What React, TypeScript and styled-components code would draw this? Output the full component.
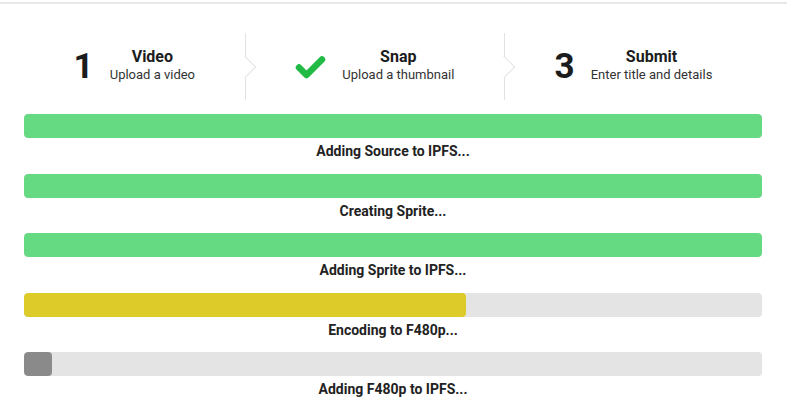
import { createGlobalStyle, styled } from "styled-components";

const GlobalStyle = createGlobalStyle`
  html, body {
    margin: 0;
    padding: 0;
    background: #ffffff;
  }
  body {
    font-family: Roboto, "Liberation Sans", sans-serif;
    color: #1f1f1f;
  }
`;

const Page = styled.div`
  padding-top: 2px;
`;

const TopRule = styled.div`
  height: 2px;
  background: #e8e8e8;
`;

const Content = styled.div`
  padding: 29px 25px 0 24px;
`;

const Steps = styled.div`
  display: flex;
  height: 67px;
`;

const Step = styled.div<{ last?: boolean }>`
  position: relative;
  flex: 1 1 auto;
  display: flex;
  align-items: center;
  justify-content: center;
  gap: 16px;
  padding: 0 48px;
  border-right: ${(p) => (p.last ? "none" : "1px solid #e2e2e2")};

  &::after {
    content: "";
    display: ${(p) => (p.last ? "none" : "block")};
    position: absolute;
    top: 50%;
    right: 0;
    width: 15px;
    height: 15px;
    background: #ffffff;
    border-top: 1px solid #e2e2e2;
    border-right: 1px solid #e2e2e2;
    transform: translate(50%, -50%) rotate(45deg);
    z-index: 2;
  }
`;

const StepNumber = styled.div`
  font-size: 35px;
  font-weight: 700;
  line-height: 1;
  color: #1b1c1d;
`;

const StepText = styled.div`
  display: flex;
  flex-direction: column;
  align-items: center;
  gap: 1px;
  margin-top: -2px;
`;

const StepTitle = styled.div`
  font-size: 16px;
  font-weight: 700;
  line-height: 18px;
  color: #1b1c1d;
`;

const StepDesc = styled.div`
  font-size: 13px;
  line-height: 16px;
  color: #333333;
`;

const Bars = styled.div`
  padding-top: 14px;
  display: flex;
  flex-direction: column;
  gap: 14.5px;
`;

const ProgressBlock = styled.div`
  display: flex;
  flex-direction: column;
`;

const Track = styled.div`
  height: 24px;
  border-radius: 4px;
  background: #e4e4e4;
  overflow: hidden;
`;

const Fill = styled.div<{ color: string }>`
  height: 100%;
  border-radius: 4px;
  background: ${(p) => p.color};
`;

const Label = styled.div`
  margin-top: 5px;
  text-align: center;
  font-size: 14px;
  font-weight: 700;
  line-height: 16px;
  color: #222222;
`;

const CheckIcon = () => (
  <svg width="31" height="26" viewBox="0 0 31 26">
    <path
      d="M4 13.5 L11.5 21 L27 5.5"
      fill="none"
      stroke="#21ba45"
      strokeWidth="6.5"
      strokeLinecap="round"
      strokeLinejoin="round"
    />
  </svg>
);

const progress = [
  { label: "Adding Source to IPFS...", value: 100, color: "#66da82" },
  { label: "Creating Sprite...", value: 100, color: "#66da82" },
  { label: "Adding Sprite to IPFS...", value: 100, color: "#66da82" },
  { label: "Encoding to F480p...", value: 59.9, color: "#dccb29" },
  { label: "Adding F480p to IPFS...", value: 3.8, color: "#8a8a8a" },
];

export default function App() {
  return (
    <Page>
      <GlobalStyle />
      <TopRule />
      <Content>
        <Steps>
          <Step>
            <StepNumber>1</StepNumber>
            <StepText>
              <StepTitle>Video</StepTitle>
              <StepDesc>Upload a video</StepDesc>
            </StepText>
          </Step>
          <Step>
            <CheckIcon />
            <StepText>
              <StepTitle>Snap</StepTitle>
              <StepDesc>Upload a thumbnail</StepDesc>
            </StepText>
          </Step>
          <Step last>
            <StepNumber>3</StepNumber>
            <StepText>
              <StepTitle>Submit</StepTitle>
              <StepDesc>Enter title and details</StepDesc>
            </StepText>
          </Step>
        </Steps>
        <Bars>
          {progress.map((p) => (
            <ProgressBlock key={p.label}>
              <Track>
                <Fill color={p.color} style={{ width: `${p.value}%` }} />
              </Track>
              <Label>{p.label}</Label>
            </ProgressBlock>
          ))}
        </Bars>
      </Content>
    </Page>
  );
}
